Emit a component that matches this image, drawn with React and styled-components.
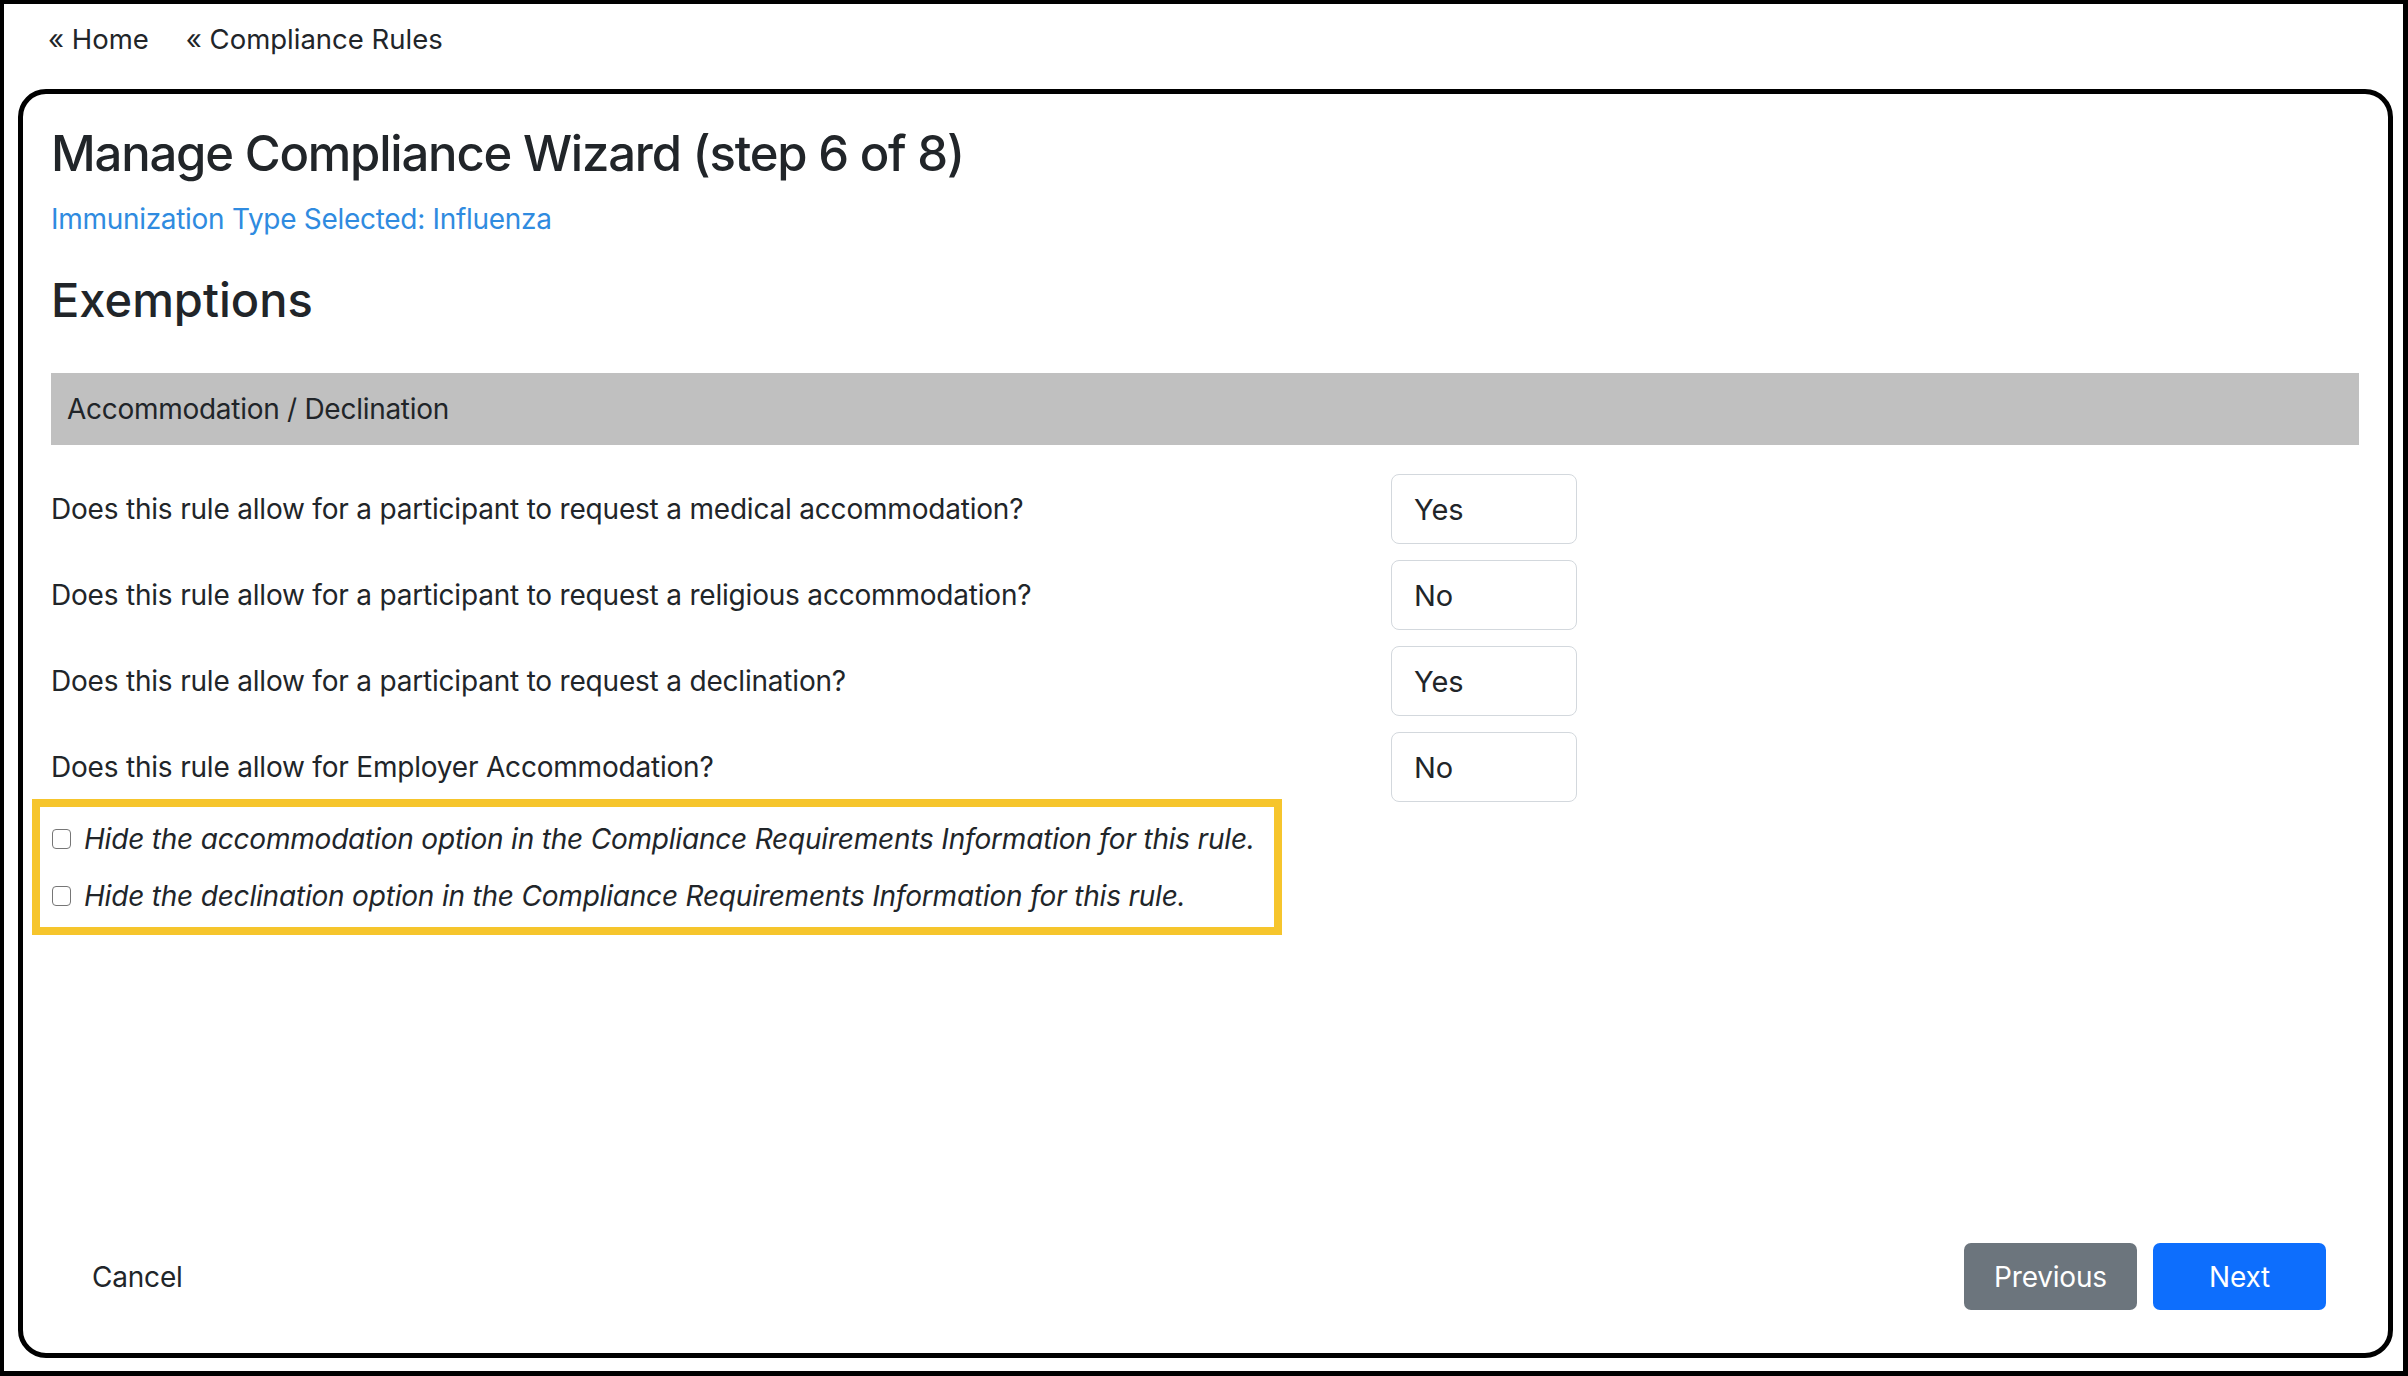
import React from "react";
import styled, { createGlobalStyle } from "styled-components";

const GlobalStyle = createGlobalStyle`
  * {
    box-sizing: border-box;
  }
  html, body {
    margin: 0;
    padding: 0;
    background: #ffffff;
  }
  body {
    font-family: Inter, "Noto Sans", "Liberation Sans", sans-serif;
    color: #212529;
  }
`;

const Frame = styled.div`
  width: 2408px;
  height: 1376px;
  border: 4px solid #000;
  border-bottom-width: 5px;
  border-right-width: 5px;
  display: flex;
  flex-direction: column;
  overflow: hidden;
`;

const Crumbs = styled.nav`
  display: flex;
  gap: 37px;
  padding: 20px 0 0 44px;
  font-size: 27.5px;
  line-height: 30px;
`;

const Crumb = styled.a`
  color: #212529;
  text-decoration: none;
`;

const Card = styled.section`
  flex: 1;
  margin: 35px 10px 13px 14px;
  border: 5px solid #000;
  border-radius: 28px;
  padding: 29px 29px 43px 28px;
  display: flex;
  flex-direction: column;
`;

const Title = styled.h1`
  margin: 0;
  font-size: 49px;
  line-height: 61px;
  letter-spacing: -1.2px;
  font-weight: 500;
`;

const Subtitle = styled.div`
  margin-top: 13px;
  font-size: 28px;
  line-height: 44px;
  letter-spacing: -0.3px;
  color: #2f8be0;
`;

const Heading = styled.h2`
  margin: 31px 0 0;
  font-size: 47px;
  line-height: 1.2;
  font-weight: 500;
`;

const SectionBar = styled.div`
  margin-top: 45px;
  height: 72px;
  display: flex;
  align-items: center;
  padding-left: 16px;
  background: #c0c0c0;
  font-size: 28px;
  letter-spacing: -0.28px;
`;

const Questions = styled.div`
  margin-top: 29px;
  display: flex;
  flex-direction: column;
  gap: 16px;
`;

const QuestionRow = styled.div`
  display: grid;
  grid-template-columns: 1340px 186px;
  align-items: center;
  font-size: 28px;
  letter-spacing: -0.2px;
`;

const ValueBox = styled.div`
  height: 70px;
  display: flex;
  align-items: center;
  padding-left: 22px;
  border: 1px solid #d3d8dd;
  border-radius: 8px;
  background: #fff;
  font-size: 29px;
  letter-spacing: 0;
`;

const Highlight = styled.div`
  width: 1250px;
  margin: -19px 0 0 -19px;
  border: 8px solid #f6c52c;
  padding: 10px 0 9px 12px;
  display: flex;
  flex-direction: column;
  gap: 13px;
`;

const CheckRow = styled.label`
  display: flex;
  align-items: center;
  gap: 13px;
  font-size: 28px;
  letter-spacing: -0.2px;
  line-height: 44px;
  font-style: italic;
  white-space: nowrap;
`;

const Box = styled.span`
  width: 19px;
  height: 20px;
  border: 1.5px solid #767676;
  border-radius: 4px;
  background: #fff;
  flex-shrink: 0;
`;

const Footer = styled.div`
  margin-top: auto;
  display: flex;
  align-items: center;
  padding: 0 33px 0 21px;
`;

const LinkButton = styled.button`
  border: none;
  background: none;
  padding: 0 20px;
  font: inherit;
  font-size: 28px;
  letter-spacing: -0.2px;
  color: #212529;
`;

const Actions = styled.div`
  margin-left: auto;
  display: flex;
  gap: 16px;
`;

const ActionButton = styled.button`
  width: 173px;
  height: 67px;
  border: none;
  border-radius: 7px;
  font-family: inherit;
  font-size: 28px;
  letter-spacing: -0.2px;
  color: #fff;
  background: ${(p) => (p.$primary ? "#0d6efd" : "#6c757d")};
`;

const QUESTIONS = [
  ["Does this rule allow for a participant to request a medical accommodation?", "Yes"],
  ["Does this rule allow for a participant to request a religious accommodation?", "No"],
  ["Does this rule allow for a participant to request a declination?", "Yes"],
  ["Does this rule allow for Employer Accommodation?", "No"],
];

const OPTIONS = [
  "Hide the accommodation option in the Compliance Requirements Information for this rule.",
  "Hide the declination option in the Compliance Requirements Information for this rule.",
];

const App = () => {
  return (
    <>
      <GlobalStyle />
      <Frame>
        <Crumbs>
          <Crumb href="#">« Home</Crumb>
          <Crumb href="#">« Compliance Rules</Crumb>
        </Crumbs>
        <Card>
          <Title>Manage Compliance Wizard (step 6 of 8)</Title>
          <Subtitle>Immunization Type Selected: Influenza</Subtitle>
          <Heading>Exemptions</Heading>
          <SectionBar>Accommodation / Declination</SectionBar>
          <Questions>
            {QUESTIONS.map(([q, a]) => (
              <QuestionRow key={q}>
                <span>{q}</span>
                <ValueBox>{a}</ValueBox>
              </QuestionRow>
            ))}
            <Highlight>
              {OPTIONS.map((o) => (
                <CheckRow key={o}>
                  <Box />
                  {o}
                </CheckRow>
              ))}
            </Highlight>
          </Questions>
          <Footer>
            <LinkButton>Cancel</LinkButton>
            <Actions>
              <ActionButton>Previous</ActionButton>
              <ActionButton $primary>Next</ActionButton>
            </Actions>
          </Footer>
        </Card>
      </Frame>
    </>
  );
};

export default App;
